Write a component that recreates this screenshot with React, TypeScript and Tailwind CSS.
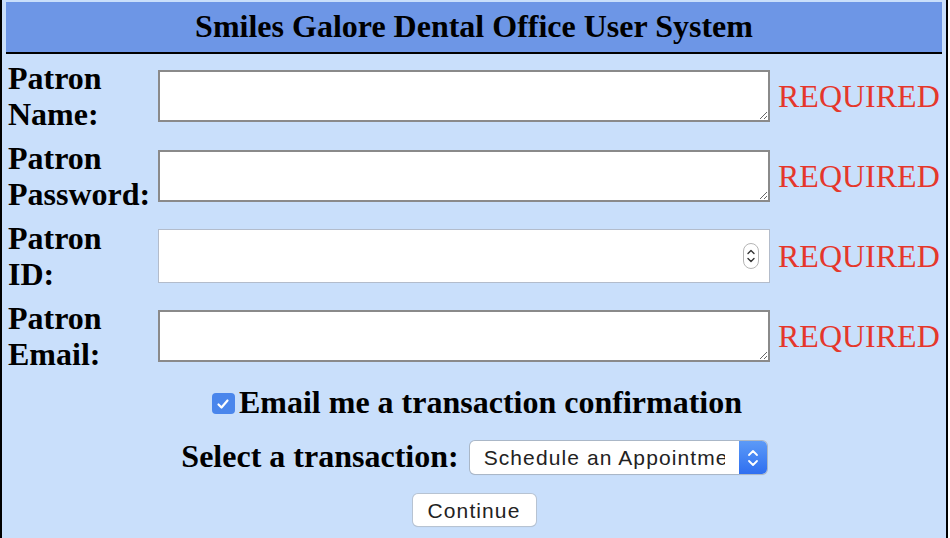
import React from 'react';

const serif = { fontFamily: '"Liberation Serif", "Times New Roman", serif' };
const sans = { fontFamily: '"Liberation Sans", Arial, sans-serif' };

const fields = [
  { top: 'Patron', bottom: 'Name:', kind: 'area' },
  { top: 'Patron', bottom: 'Password:', kind: 'area' },
  { top: 'Patron', bottom: 'ID:', kind: 'number' },
  { top: 'Patron', bottom: 'Email:', kind: 'area' },
];

const Spinner: React.FC = () => (
  <div className="absolute right-[11px] top-1/2 -translate-y-1/2 w-[16px] h-[26px] rounded-[8px] border border-[#b5b5b5] bg-white flex items-center justify-center">
    <svg width="10" height="18" viewBox="0 0 10 18" fill="none" stroke="#333" strokeWidth="1.4" strokeLinecap="round" strokeLinejoin="round">
      <path d="M2 6.5 L5 3.5 L8 6.5" />
      <path d="M2 11.5 L5 14.5 L8 11.5" />
    </svg>
  </div>
);

const App: React.FC = () => {
  return (
    <div className="w-[948px] h-[538px] overflow-hidden bg-[#c9dffb] border-x-2 border-black px-[4px] pt-[2px]" style={serif}>
      <div className="h-[52px] bg-[#6d96e6] border-b-2 border-black flex items-center justify-center">
        <h1 className="text-[32px] font-bold leading-none text-black pb-[2px]">Smiles Galore Dental Office User System</h1>
      </div>

      <div className="mt-[2px]">
        {fields.map((f) => (
          <div key={f.bottom} className="h-[80px] flex items-center">
            <div className="w-[152px] pl-[2px] text-[32px] font-bold leading-[36px] text-black">
              <div>{f.top}</div>
              <div>{f.bottom}</div>
            </div>
            {f.kind === 'area' ? (
              <textarea
                className="w-[612px] h-[52px] bg-white border-2 border-[#8a8a8a] resize outline-none"
                aria-label={`${f.top} ${f.bottom}`}
              />
            ) : (
              <div className="relative w-[612px] h-[54px]">
                <input
                  type="text"
                  className="w-full h-full bg-white border border-[#b3bccb] outline-none"
                  aria-label={`${f.top} ${f.bottom}`}
                />
                <Spinner />
              </div>
            )}
            <span className="ml-[8px] text-[32px] leading-none text-[#e5372b]">REQUIRED</span>
          </div>
        ))}
      </div>

      <div className="mt-[8px] h-[37px] flex items-center justify-center">
        <span className="w-[23px] h-[21px] rounded-[4px] bg-[#4a86ec] flex items-center justify-center mr-[4px] ml-[6px] mt-[2px]">
          <svg width="14" height="12" viewBox="0 0 14 12" fill="none" stroke="white" strokeWidth="2.2" strokeLinecap="round" strokeLinejoin="round">
            <path d="M2.5 6.5 L5.5 9.5 L11.5 2.5" />
          </svg>
        </span>
        <span className="text-[32px] font-bold leading-[37px] text-black">Email me a transaction confirmation</span>
      </div>

      <div className="mt-[17px] h-[37px] flex items-center justify-center">
        <span className="text-[32px] font-bold leading-[37px] text-black mr-[11px]">Select a transaction:</span>
        <div className="w-[297px] h-[33px] flex rounded-[5px] bg-white shadow-[0_0_0_1px_#aab7c7,0_1px_1px_rgba(0,0,0,0.15)] overflow-hidden mt-[2px]" style={sans}>
          <div className="flex-1 pl-[14px] pr-[14px] min-w-0">
            <div className="overflow-hidden whitespace-nowrap text-[21px] tracking-[1.1px] leading-[33px] text-[#222]">
              Schedule an Appointment
            </div>
          </div>
          <div className="w-[28px] h-full bg-gradient-to-b from-[#5c9af7] to-[#2f6ef0] flex items-center justify-center">
            <svg width="14" height="22" viewBox="0 0 14 22" fill="none" stroke="white" strokeWidth="1.8" strokeLinecap="round" strokeLinejoin="round">
              <path d="M3 8 L7 4 L11 8" />
              <path d="M3 14 L7 18 L11 14" />
            </svg>
          </div>
        </div>
      </div>

      <div className="mt-[19px] flex justify-center">
        <button
          className="w-[123px] h-[32px] rounded-[5px] bg-white text-[21px] tracking-[1.1px] leading-none text-[#222] shadow-[0_0_0_1px_#b7c3d2,0_1px_1px_rgba(0,0,0,0.15)]"
          style={sans}
        >
          Continue
        </button>
      </div>
    </div>
  );
};

export default App;
